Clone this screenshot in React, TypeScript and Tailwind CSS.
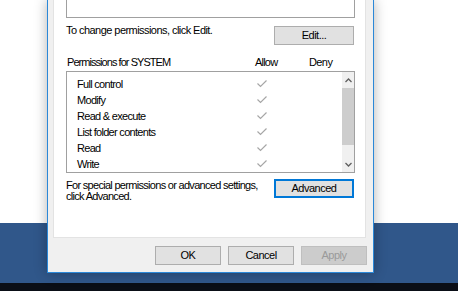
import React from 'react';

const perms = ['Full control', 'Modify', 'Read & execute', 'List folder contents', 'Read', 'Write'];

const Check: React.FC = () => (
  <svg width="10" height="8" viewBox="0 0 10 8" className="block">
    <polyline points="0.5,3.5 3.5,6.5 9.5,0.5" fill="none" stroke="#a6a6a6" strokeWidth="1.2" />
  </svg>
);

const Btn: React.FC<{ label: string; className?: string; disabled?: boolean }> = ({ label, className = '', disabled }) => (
  <div
    className={`flex h-[19px] items-center justify-center border text-[11px] tracking-[-0.5px] ${
      disabled ? 'border-[#bfbfbf] bg-[#cccccc] text-[#9a9a9a]' : 'border-[#adadad] bg-[#e1e1e1] text-black'
    } ${className}`}
  >
    {label}
  </div>
);

const App: React.FC = () => {
  return (
    <div
      className="relative h-[291px] w-[458px] overflow-hidden"
      style={{ fontFamily: '"Liberation Sans", Arial, sans-serif' }}
    >
      {/* desktop */}
      <div className="flex h-full flex-col">
        <div className="h-[223px] bg-white" />
        <div className="h-[60px] bg-[#30578a]" />
        <div className="flex-1 bg-[#0a0e16]" />
      </div>

      {/* dialog window */}
      <div className="absolute left-[47px] top-0 flex h-[273px] w-[327px] flex-col border-x border-b border-[#2b88d8] bg-[#f0f0f0] pl-[5px] pr-[6px] shadow-[0_0_12px_rgba(0,0,0,0.3)]">
        {/* tab panel */}
        <div className="flex h-[238px] w-[313px] flex-col border-x border-b border-[#e3e3e3] bg-white pl-[12px] pr-[10px] text-[11px] leading-[13px] tracking-[-0.7px] text-black">
          <div className="h-[18px] w-[289px] border-x border-b border-[#a0a0a0]" />

          <div className="mt-[6px] flex items-start justify-between">
            <span className="tracking-[-0.55px]">To change permissions, click Edit.</span>
            <Btn label="Edit..." className="mr-[1px] mt-[2px] w-[80px]" />
          </div>

          <div className="mt-[11px] flex">
            <span className="w-[189px] pl-[1px] tracking-[-0.95px]">Permissions for SYSTEM</span>
            <span className="w-[54px] tracking-[-0.8px]">Allow</span>
            <span className="tracking-[-0.6px]">Deny</span>
          </div>

          {/* permissions list */}
          <div className="mt-[2px] flex h-[102px] w-[289px] border border-[#a0a0a0]">
            <div className="flex-1 pl-[10px] pt-[4px]">
              {perms.map((p) => (
                <div key={p} className="flex h-[16px] items-center leading-[16px]">
                  <span className="w-[180px]">{p}</span>
                  <Check />
                </div>
              ))}
            </div>
            <div className="flex w-[12px] flex-col bg-[#f0f0f0]">
              <div className="flex h-[16px] items-center justify-center">
                <svg width="7" height="5" viewBox="0 0 7 5">
                  <polyline points="0.5,4 3.5,1 6.5,4" fill="none" stroke="#606060" strokeWidth="1.3" />
                </svg>
              </div>
              <div className="h-[57px] bg-[#cdcdcd]" />
              <div className="flex-1" />
              <div className="flex h-[16px] items-center justify-center">
                <svg width="7" height="5" viewBox="0 0 7 5">
                  <polyline points="0.5,1 3.5,4 6.5,1" fill="none" stroke="#606060" strokeWidth="1.3" />
                </svg>
              </div>
            </div>
          </div>

          <div className="mt-[6px] flex items-start justify-between">
            <div className="pt-[1px] leading-[11px]">
              <div>For special permissions or advanced settings,</div>
              <div>click Advanced.</div>
            </div>
            <Btn label="Advanced" className="mr-[1px] w-[80px] !border-[#0078d7] shadow-[inset_0_0_0_1px_#0078d7]" />
          </div>
        </div>

        {/* dialog buttons */}
        <div className="mt-[8px] flex justify-end gap-[7px]">
          <Btn label="OK" className="w-[66px]" />
          <Btn label="Cancel" className="w-[66px]" />
          <Btn label="Apply" className="w-[66px]" disabled />
        </div>
      </div>
    </div>
  );
};

export default App;
